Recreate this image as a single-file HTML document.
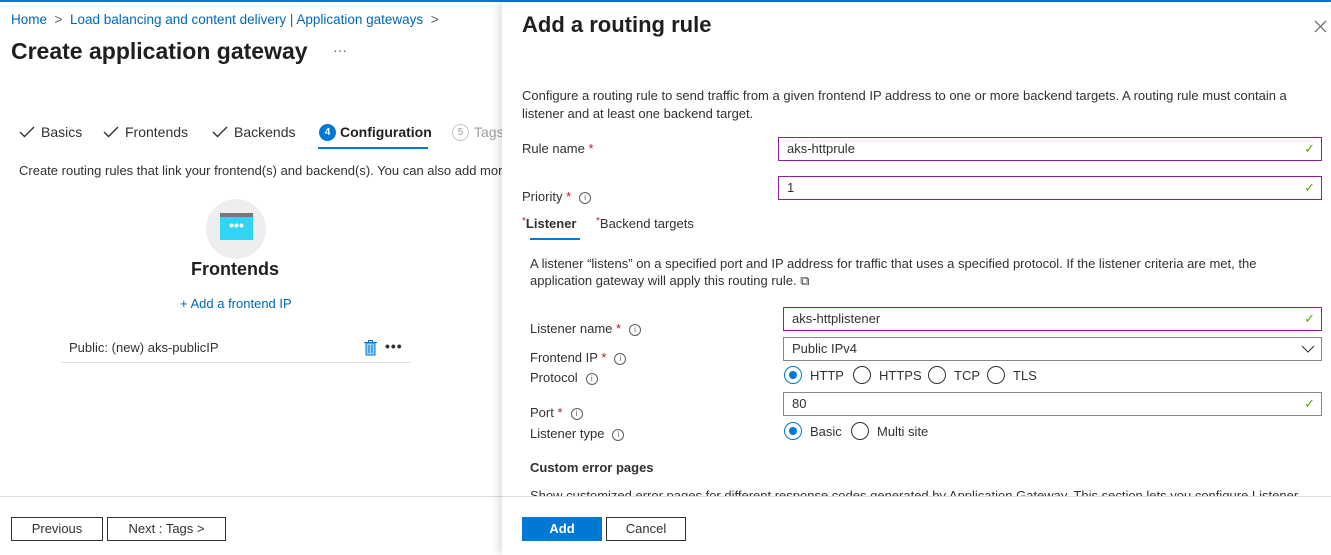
<!DOCTYPE html>
<html><head><style>
*{box-sizing:border-box;margin:0;padding:0}
body{width:1331px;height:555px;position:relative;overflow:hidden;background:#fff;font-family:"Segoe UI","Liberation Sans",sans-serif;font-size:13px;color:#323130}
.a{position:absolute;white-space:nowrap}
.blue{color:#0067b8}
.req{color:#a4262c}
.inp{position:absolute;height:24px;border:1px solid #8a1fa3;padding:3px 8px;font-size:13px}
.inp .ck{position:absolute;right:6px;top:3px}
.info{display:inline-block;width:12px;height:12px;border:1px solid #605e5c;border-radius:50%;font-size:8px;line-height:10px;text-align:center;color:#605e5c;vertical-align:middle;margin-left:8px}
.rad{position:absolute;width:18px;height:18px;border:1px solid #323130;border-radius:50%}
.rad.on{border-color:#0078d4}
.rad.on::after{content:"";position:absolute;left:4px;top:4px;width:8px;height:8px;border-radius:50%;background:#0078d4}
.btn{position:absolute;height:24px;border:1px solid #323130;text-align:center;line-height:22px;font-size:13px;font-weight:600}
.chk{position:absolute}
</style></head><body>
<div class="a" style="left:0;top:0;width:1331px;height:2px;background:#0078d4"></div>
<div class="a" style="left:11px;top:12px;font-size:13.5px"><span class="blue">Home</span> <span style="color:#605e5c">&nbsp;&gt;&nbsp;</span> <span class="blue">Load balancing and content delivery | Application gateways</span> <span style="color:#605e5c">&nbsp;&gt;</span></div>
<div class="a" style="left:11px;top:38px;font-size:23px;font-weight:600;color:#201f1e">Create application gateway</div>
<div class="a" style="left:333px;top:42px;font-size:14px;color:#605e5c">···</div>
<svg class="chk" style="left:19px;top:126px" width="16" height="12"><path d="M1 6l4.5 4.5L15 1" stroke="#323130" stroke-width="1.4" fill="none"/></svg>
<div class="a" style="left:41px;top:124px;font-size:14px">Basics</div>
<svg class="chk" style="left:103px;top:126px" width="16" height="12"><path d="M1 6l4.5 4.5L15 1" stroke="#323130" stroke-width="1.4" fill="none"/></svg>
<div class="a" style="left:125px;top:124px;font-size:14px">Frontends</div>
<svg class="chk" style="left:212px;top:126px" width="16" height="12"><path d="M1 6l4.5 4.5L15 1" stroke="#323130" stroke-width="1.4" fill="none"/></svg>
<div class="a" style="left:234px;top:124px;font-size:14px">Backends</div>
<div class="a" style="left:319px;top:124px;width:17px;height:17px;border-radius:50%;background:#0078d4;color:#fff;font-size:10px;text-align:center;line-height:17px;font-weight:600">4</div>
<div class="a" style="left:340px;top:124px;font-size:14px;font-weight:600;color:#201f1e">Configuration</div>
<div class="a" style="left:318px;top:147px;width:110px;height:2px;background:#0078d4"></div>
<div class="a" style="left:452px;top:124px;width:17px;height:17px;border-radius:50%;border:1px solid #c8c6c4;color:#a19f9d;font-size:10px;text-align:center;line-height:15px">5</div>
<div class="a" style="left:474px;top:124px;font-size:14px;color:#a19f9d">Tags</div>
<div class="a" style="left:19px;top:163px;font-size:13px">Create routing rules that link your frontend(s) and backend(s). You can also add more</div>
<div class="a" style="left:206px;top:199px;width:60px;height:60px;border-radius:50%;background:#eeeeee"></div>
<div class="a" style="left:220px;top:213px;width:33px;height:27px;background:#32d4f5"><div style="height:4px;background:#777"></div><div style="color:#fff;font-size:14px;text-align:center;line-height:17px;font-weight:bold">•••</div></div>
<div class="a" style="left:191px;top:259px;font-size:18px;font-weight:600;color:#201f1e">Frontends</div>
<div class="a blue" style="left:180px;top:296px;font-size:13px">+ Add a frontend IP</div>
<div class="a" style="left:69px;top:340px;font-size:13px">Public: (new) aks-publicIP</div>
<svg class="a" style="left:364px;top:340px" width="13" height="16" viewBox="0 0 13 16"><rect x="2" y="3" width="9" height="12" fill="#9ed0f5" stroke="#0078d4"/><line x1="0" y1="2.5" x2="13" y2="2.5" stroke="#0078d4"/><rect x="4.5" y="0.5" width="4" height="2" fill="none" stroke="#0078d4"/><line x1="5" y1="5" x2="5" y2="13" stroke="#0078d4"/><line x1="8" y1="5" x2="8" y2="13" stroke="#0078d4"/></svg>
<div class="a" style="left:385px;top:338px;font-size:14px;font-weight:bold;letter-spacing:1px">•••</div>
<div class="a" style="left:61px;top:362px;width:350px;height:1px;background:#e1dfdd"></div>
<div class="a" style="left:0;top:496px;width:510px;height:1px;background:#e1dfdd"></div>
<div class="btn" style="left:11px;top:517px;width:92px;font-weight:400">Previous</div>
<div class="btn" style="left:107px;top:517px;width:119px;font-weight:400">Next : Tags &gt;</div>
<div class="a" style="left:502px;top:2px;width:829px;height:553px;background:#fff;box-shadow:-4px 0 8px rgba(0,0,0,0.12)"></div>
<div class="a" style="left:522px;top:12px;font-size:22px;font-weight:600;color:#201f1e">Add a routing rule</div>
<svg class="a" style="left:1314px;top:20px" width="13" height="13"><path d="M1 1l11 11M12 1L1 12" stroke="#605e5c" stroke-width="1.2"/></svg>
<div class="a" style="left:522px;top:87px;font-size:13px;line-height:18px;white-space:normal;width:800px">Configure a routing rule to send traffic from a given frontend IP address to one or more backend targets. A routing rule must contain a listener and at least one backend target.</div>
<div class="a" style="left:522px;top:141px">Rule name <span class="req">*</span></div>
<div class="inp" style="left:778px;top:137px;width:544px">aks-httprule<span class="ck" style="color:#57a300">✓</span></div>
<div class="a" style="left:522px;top:189px">Priority <span class="req">*</span><span class="info">i</span></div>
<div class="inp" style="left:778px;top:176px;width:544px">1<span class="ck" style="color:#57a300">✓</span></div>
<div class="a" style="left:522px;top:216px;font-size:13px"><span class="req" style="font-size:10px;vertical-align:top">*</span><b style="font-weight:600">Listener</b></div>
<div class="a" style="left:530px;top:238px;width:50px;height:2px;background:#0078d4"></div>
<div class="a" style="left:596px;top:216px;font-size:13px"><span class="req" style="font-size:10px;vertical-align:top">*</span>Backend targets</div>
<div class="a" style="left:530px;top:255px;line-height:17px">A listener “listens” on a specified port and IP address for traffic that uses a specified protocol. If the listener criteria are met, the<br>application gateway will apply this routing rule. ⧉</div>
<div class="a" style="left:530px;top:321px">Listener name <span class="req">*</span><span class="info">i</span></div>
<div class="inp" style="left:783px;top:307px;width:539px">aks-httplistener<span class="ck" style="color:#57a300">✓</span></div>
<div class="a" style="left:530px;top:350px">Frontend IP <span class="req">*</span><span class="info">i</span></div>
<div class="inp" style="left:783px;top:337px;width:539px;border-color:#8a8886">Public IPv4<svg class="ck" style="top:7px" width="14" height="8"><path d="M1 1l6 6 6-6" stroke="#323130" fill="none"/></svg></div>
<div class="a" style="left:530px;top:370px">Protocol<span class="info">i</span></div>
<div class="rad on" style="left:784px;top:366px"></div><div class="a" style="left:810px;top:368px">HTTP</div>
<div class="rad" style="left:853px;top:366px"></div><div class="a" style="left:879px;top:368px">HTTPS</div>
<div class="rad" style="left:928px;top:366px"></div><div class="a" style="left:954px;top:368px">TCP</div>
<div class="rad" style="left:987px;top:366px"></div><div class="a" style="left:1013px;top:368px">TLS</div>
<div class="a" style="left:530px;top:405px">Port <span class="req">*</span><span class="info">i</span></div>
<div class="inp" style="left:783px;top:392px;width:539px;border-color:#8a8886">80<span class="ck" style="color:#57a300">✓</span></div>
<div class="a" style="left:530px;top:426px">Listener type<span class="info">i</span></div>
<div class="rad on" style="left:784px;top:422px"></div><div class="a" style="left:810px;top:424px">Basic</div>
<div class="rad" style="left:851px;top:422px"></div><div class="a" style="left:877px;top:424px">Multi site</div>
<div class="a" style="left:530px;top:460px;font-weight:600">Custom error pages</div>
<div class="a" style="left:530px;top:489px;height:7px;overflow:hidden;line-height:14px">Show customized error pages for different response codes generated by Application Gateway. This section lets you configure Listener</div>
<div class="a" style="left:502px;top:496px;width:829px;height:1px;background:#e1dfdd"></div>
<div class="btn" style="left:522px;top:517px;width:80px;background:#0078d4;border-color:#0078d4;color:#fff">Add</div>
<div class="btn" style="left:606px;top:517px;width:80px;font-weight:400">Cancel</div>
</body></html>
